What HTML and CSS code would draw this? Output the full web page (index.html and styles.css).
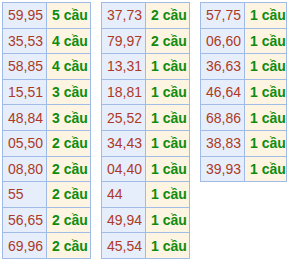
FILE: index.html
```html
<!DOCTYPE html>
<html lang="vi">
<head>
<meta charset="utf-8">
<link rel="stylesheet" href="styles.css">
</head>
<body>
<div class="wrap">
  <table class="tk t1">
    <tr><td class="num">59,95</td><td class="cnt">5 cầu</td></tr>
    <tr><td class="num">35,53</td><td class="cnt">4 cầu</td></tr>
    <tr><td class="num">58,85</td><td class="cnt">4 cầu</td></tr>
    <tr><td class="num">15,51</td><td class="cnt">3 cầu</td></tr>
    <tr><td class="num">48,84</td><td class="cnt">3 cầu</td></tr>
    <tr><td class="num">05,50</td><td class="cnt">2 cầu</td></tr>
    <tr><td class="num">08,80</td><td class="cnt">2 cầu</td></tr>
    <tr><td class="num">55</td><td class="cnt">2 cầu</td></tr>
    <tr><td class="num">56,65</td><td class="cnt">2 cầu</td></tr>
    <tr><td class="num">69,96</td><td class="cnt">2 cầu</td></tr>
  </table>
  <table class="tk t2">
    <tr><td class="num">37,73</td><td class="cnt">2 cầu</td></tr>
    <tr><td class="num">79,97</td><td class="cnt">2 cầu</td></tr>
    <tr><td class="num">13,31</td><td class="cnt">1 cầu</td></tr>
    <tr><td class="num">18,81</td><td class="cnt">1 cầu</td></tr>
    <tr><td class="num">25,52</td><td class="cnt">1 cầu</td></tr>
    <tr><td class="num">34,43</td><td class="cnt">1 cầu</td></tr>
    <tr><td class="num">04,40</td><td class="cnt">1 cầu</td></tr>
    <tr><td class="num">44</td><td class="cnt">1 cầu</td></tr>
    <tr><td class="num">49,94</td><td class="cnt">1 cầu</td></tr>
    <tr><td class="num">45,54</td><td class="cnt">1 cầu</td></tr>
  </table>
  <table class="tk t3">
    <tr><td class="num">57,75</td><td class="cnt">1 cầu</td></tr>
    <tr><td class="num">06,60</td><td class="cnt">1 cầu</td></tr>
    <tr><td class="num">36,63</td><td class="cnt">1 cầu</td></tr>
    <tr><td class="num">46,64</td><td class="cnt">1 cầu</td></tr>
    <tr><td class="num">68,86</td><td class="cnt">1 cầu</td></tr>
    <tr><td class="num">38,83</td><td class="cnt">1 cầu</td></tr>
    <tr><td class="num">39,93</td><td class="cnt">1 cầu</td></tr>
  </table>
</div>
</body>
</html>
```
FILE: styles.css
```css
html, body {
  margin: 0;
  padding: 0;
  background: #ffffff;
}
.wrap {
  display: flex;
  align-items: flex-start;
  gap: 10px;
  padding: 2px 0 0 2px;
  font-family: "Liberation Sans", Arial, sans-serif;
  font-size: 14px;
}
.tk {
  border-collapse: collapse;
  border: 1px solid #9fbbe6;
}
.tk td {
  border: 1px solid #9fbbe6;
  height: 25.6px;
  padding: 0 0 0 5px;
  box-sizing: border-box;
  white-space: nowrap;
  vertical-align: middle;
}
.num {
  background: #e6eefc;
  color: #ad3a26;
  width: 44px;
}
.cnt {
  background: #fdf5e2;
  color: #0f8c0f;
  font-weight: bold;
  width: 44px;
}
.t3 .num { width: 44px; }
.t3 .cnt { width: 40px; }
.t2 .cnt { width: 44px; }
```
